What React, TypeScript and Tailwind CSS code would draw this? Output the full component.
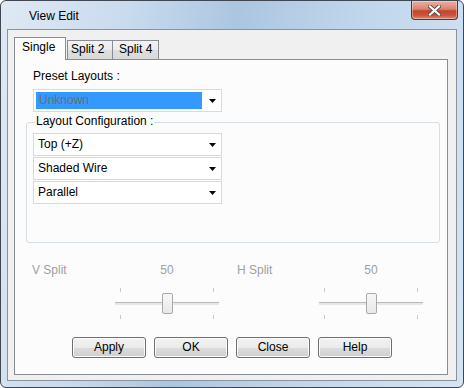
import React from "react";

function Arrow() {
  return (
    <svg className="ml-auto mr-[5px] h-[4px] w-[7px]" viewBox="0 0 7 4">
      <polygon points="0,0 7,0 3.5,4" fill="#000" />
    </svg>
  );
}

function Combo({ value, selected }: { value: string; selected?: boolean }) {
  return (
    <div className="flex h-[23px] w-[189px] items-center border border-[#d9d9d9] bg-white">
      {selected ? (
        <div className="ml-[2px] flex h-[17px] w-[166px] items-center bg-[#3399ff] pl-[3px] text-[#6d6d6d]">{value}</div>
      ) : (
        <span className="pl-[4px]">{value}</span>
      )}
      <Arrow />
    </div>
  );
}

function Slider() {
  return (
    <div className="relative ml-auto mt-[10px] h-[32px] w-[104px]">
      <div className="absolute left-[5px] top-0 h-[4px] w-px bg-[#c8c8c8]" />
      <div className="absolute left-[98px] top-0 h-[4px] w-px bg-[#c8c8c8]" />
      <div className="absolute left-0 right-0 top-[14px] h-[3px] border-t border-[#b9b9b9] bg-[#e6e8e8]" />
      <div className="absolute left-[47px] top-[5px] h-[21px] w-[11px] rounded-[2px] border border-[#a9a9a9] bg-gradient-to-b from-[#f7f7f7] to-[#e8e8e8]" />
      <div className="absolute left-[5px] top-[27px] h-[4px] w-px bg-[#c8c8c8]" />
      <div className="absolute left-[98px] top-[27px] h-[4px] w-px bg-[#c8c8c8]" />
    </div>
  );
}

function SplitCol({ label, width }: { label: string; width: string }) {
  return (
    <div className={width}>
      <div className="flex h-[15px] text-[#a0a0a0]">
        <span>{label}</span>
        <span className="ml-auto w-[104px] text-center">50</span>
      </div>
      <Slider />
    </div>
  );
}

function Btn({ children }: { children: React.ReactNode }) {
  return (
    <button className="h-[21px] w-[74px] rounded-[3px] border border-[#707070] bg-[linear-gradient(to_bottom,#f2f2f2_0%,#ebebeb_50%,#dddddd_50%,#cfcfcf_100%)] text-[12px] leading-[15px] text-black shadow-[inset_0_0_0_1px_#fbfbfb]">
      {children}
    </button>
  );
}

export default function App() {
  return (
    <div className="flex h-[388px] w-[464px] flex-col rounded-[6px] border border-[#3f4852] bg-[linear-gradient(100deg,#dfe9f5_0%,#c8daed_25%,#acc6e0_45%,#c2d7ec_70%,#d4e4f3_100%)] px-[6px] pb-[6px] font-['Liberation_Sans',Arial,sans-serif] text-[12px] leading-[15px] text-black">
      {/* Title bar */}
      <div className="flex h-[28px] items-start">
        <span className="ml-[22px] pt-[8px] text-[12px] text-black">View Edit</span>
        <div className="-mr-px ml-auto flex h-[19px] w-[47px] items-center justify-center rounded-b-[4px] border border-t-0 border-[#4b3a36] bg-[linear-gradient(to_bottom,#e9b0a4_0%,#d98571_45%,#c4442c_55%,#cc553d_80%,#e08a70_100%)] shadow-[inset_0_0_0_1px_rgba(255,255,255,0.35)]">
          <svg width="13" height="11" viewBox="0 0 13 11">
            <path d="M2 1.5 L11 9.5 M11 1.5 L2 9.5" stroke="#5a4a48" strokeWidth="4" strokeLinecap="square" />
            <path d="M2 1.5 L11 9.5 M11 1.5 L2 9.5" stroke="#fff" strokeWidth="2.2" strokeLinecap="square" />
          </svg>
        </div>
      </div>

      {/* Client area */}
      <div className="flex flex-1 flex-col border border-[#8a939c] bg-[#f0f0f0] pb-[5px] pl-[6px] pr-[8px] pt-[7px]">
        {/* Tabs */}
        <div className="flex h-[22px] items-end">
          <div className="relative z-10 -mb-px h-[23px] w-[52px] border border-b-0 border-[#898c95] bg-[#fcfcfc] pl-[7px] pt-[2px]">Single</div>
          <div className="ml-px h-[19px] w-[46px] border border-b-0 border-[#898c95] bg-[linear-gradient(to_bottom,#f3f3f3_0%,#ebebeb_50%,#dedede_50%,#d9d9d9_100%)] pl-[3px] pt-px">Split 2</div>
          <div className="h-[19px] w-[46px] border border-b-0 border-l-0 border-[#898c95] bg-[linear-gradient(to_bottom,#f3f3f3_0%,#ebebeb_50%,#dedede_50%,#d9d9d9_100%)] pl-[6px] pt-px">Split 4</div>
        </div>

        {/* Pane */}
        <div className="flex flex-1 flex-col border border-[#898c95] bg-[#fcfcfc] pt-[9px]">
          <div className="ml-[18px] h-[15px]">Preset Layouts :</div>
          <div className="ml-[18px] mt-[5px]">
            <Combo value="Unknown" selected />
          </div>

          <div className="relative ml-[11px] mt-[10px] h-[121px] w-[414px] rounded-[3px] border border-[#d5dfe5] pl-[6px] pt-[10px]">
            <span className="absolute -top-[9px] left-[8px] bg-[#fcfcfc] px-px">Layout Configuration :</span>
            <div className="flex flex-col gap-px">
              <Combo value="Top (+Z)" />
              <Combo value="Shaded Wire" />
              <Combo value="Parallel" />
            </div>
          </div>

          <div className="ml-[17px] mt-[20px] flex gap-[18px]">
            <SplitCol label="V Split" width="w-[187px]" />
            <SplitCol label="H Split" width="w-[186px]" />
          </div>

          <div className="ml-[57px] mt-[17px] flex gap-[8px]">
            <Btn>Apply</Btn>
            <Btn>OK</Btn>
            <Btn>Close</Btn>
            <Btn>Help</Btn>
          </div>
        </div>
      </div>
    </div>
  );
}
